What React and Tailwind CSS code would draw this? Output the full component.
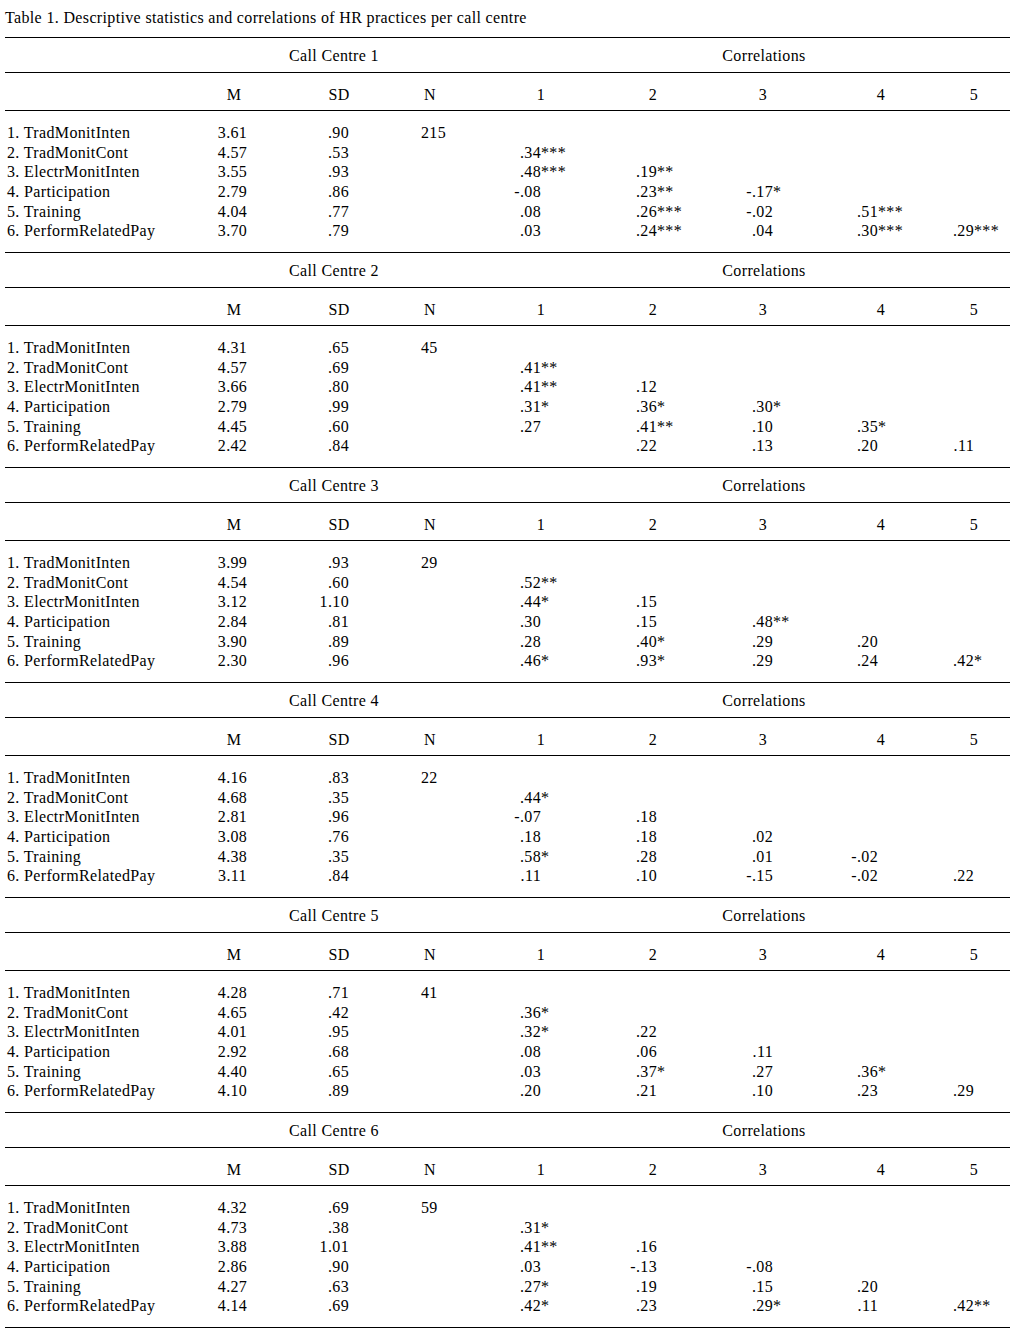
import React from 'react';

const labels = [
  '1. TradMonitInten',
  '2. TradMonitCont',
  '3. ElectrMonitInten',
  '4. Participation',
  '5. Training',
  '6. PerformRelatedPay',
];

// M, SD, correlations with items 1..5 (null = empty cell)
const centres = [
  {
    id: 1, n: '215',
    rows: [
      ['3.61', '.90', []],
      ['4.57', '.53', ['.34***']],
      ['3.55', '.93', ['.48***', '.19**']],
      ['2.79', '.86', ['-.08', '.23**', '-.17*']],
      ['4.04', '.77', ['.08', '.26***', '-.02', '.51***']],
      ['3.70', '.79', ['.03', '.24***', '.04', '.30***', '.29***']],
    ],
  },
  {
    id: 2, n: '45',
    rows: [
      ['4.31', '.65', []],
      ['4.57', '.69', ['.41**']],
      ['3.66', '.80', ['.41**', '.12']],
      ['2.79', '.99', ['.31*', '.36*', '.30*']],
      ['4.45', '.60', ['.27', '.41**', '.10', '.35*']],
      ['2.42', '.84', [null, '.22', '.13', '.20', '.11']],
    ],
  },
  {
    id: 3, n: '29',
    rows: [
      ['3.99', '.93', []],
      ['4.54', '.60', ['.52**']],
      ['3.12', '1.10', ['.44*', '.15']],
      ['2.84', '.81', ['.30', '.15', '.48**']],
      ['3.90', '.89', ['.28', '.40*', '.29', '.20']],
      ['2.30', '.96', ['.46*', '.93*', '.29', '.24', '.42*']],
    ],
  },
  {
    id: 4, n: '22',
    rows: [
      ['4.16', '.83', []],
      ['4.68', '.35', ['.44*']],
      ['2.81', '.96', ['-.07', '.18']],
      ['3.08', '.76', ['.18', '.18', '.02']],
      ['4.38', '.35', ['.58*', '.28', '.01', '-.02']],
      ['3.11', '.84', ['.11', '.10', '-.15', '-.02', '.22']],
    ],
  },
  {
    id: 5, n: '41',
    rows: [
      ['4.28', '.71', []],
      ['4.65', '.42', ['.36*']],
      ['4.01', '.95', ['.32*', '.22']],
      ['2.92', '.68', ['.08', '.06', '.11']],
      ['4.40', '.65', ['.03', '.37*', '.27', '.36*']],
      ['4.10', '.89', ['.20', '.21', '.10', '.23', '.29']],
    ],
  },
  {
    id: 6, n: '59',
    rows: [
      ['4.32', '.69', []],
      ['4.73', '.38', ['.31*']],
      ['3.88', '1.01', ['.41**', '.16']],
      ['2.86', '.90', ['.03', '-.13', '-.08']],
      ['4.27', '.63', ['.27*', '.19', '.15', '.20']],
      ['4.14', '.69', ['.42*', '.23', '.29*', '.11', '.42**']],
    ],
  },
];

// numbers are right-aligned inside num, stars hang after them
const corrCols = [
  { cell: 'ml-[31px] w-[80px]', num: 'w-[40px]' },
  { cell: 'ml-[32px] w-[80px]', num: 'w-[44px]' },
  { cell: 'ml-[30px] w-[80px]', num: 'w-[50px]' },
  { cell: 'ml-[38px] w-[80px]', num: 'w-[37px]' },
  { cell: 'ml-[23px] w-[60px]', num: 'w-[30px]' },
];

const Corr = ({ value, col }) => {
  if (!value) return <div className={`${col.cell} shrink-0`} />;
  const [, num, stars] = value.match(/^(-?[\d.]+)(\**)$/);
  return (
    <div className={`${col.cell} flex shrink-0`}>
      <span className={`${col.num} shrink-0 text-right`}>{num}</span>
      <span className="whitespace-nowrap">{stars}</span>
    </div>
  );
};

const Row = ({ label, m, sd, n, corr }) => (
  <div className="flex h-[19.7px] leading-[19.7px]">
    <div className="w-[189px] shrink-0 whitespace-nowrap pl-[2px]">{label}</div>
    <div className="w-[80px] shrink-0 pr-[3px] text-center">{m}</div>
    <div className="ml-[25px] w-[80px] shrink-0 pr-[30px] text-right">{sd}</div>
    <div className="ml-[11px] w-[80px] shrink-0 pl-[31px]">{n}</div>
    {corrCols.map((col, i) => (
      <Corr key={i} value={corr[i]} col={col} />
    ))}
  </div>
);

const Centre = ({ centre }) => (
  <div className="h-[215px] border-t border-black">
    <div className="flex h-[35px] items-center border-b border-black pt-[1px] leading-[20px]">
      <div className="w-[189px] shrink-0" />
      <div className="w-[280px] shrink-0 text-center">Call Centre {centre.id}</div>
      <div className="ml-[50px] w-[480px] shrink-0 text-center">Correlations</div>
    </div>
    <div className="flex h-[38px] border-b border-black pt-[12px] leading-[20px]">
      <div className="w-[189px] shrink-0" />
      <div className="w-[80px] shrink-0 text-center">M</div>
      <div className="ml-[25px] w-[80px] shrink-0 text-center">SD</div>
      <div className="ml-[11px] w-[80px] shrink-0 text-center">N</div>
      <div className="ml-[31px] w-[80px] shrink-0 text-center">1</div>
      <div className="ml-[32px] w-[80px] shrink-0 text-center">2</div>
      <div className="ml-[30px] w-[80px] shrink-0 text-center">3</div>
      <div className="ml-[38px] w-[80px] shrink-0 text-center">4</div>
      <div className="ml-[23px] w-[60px] shrink-0 text-center">5</div>
    </div>
    <div className="pt-[12px]">
      {centre.rows.map(([m, sd, corr], i) => (
        <Row key={i} label={labels[i]} m={m} sd={sd} n={i === 0 ? centre.n : ''} corr={corr} />
      ))}
    </div>
  </div>
);

export default function App() {
  return (
    <div className="h-[1330px] w-[1016px] overflow-hidden bg-white font-['Liberation_Serif',serif] text-[16px] tracking-[0.35px] text-black">
      <div className="h-[37px] pl-[5px] pt-[8px] leading-[20px]">
        Table 1. Descriptive statistics and correlations of HR practices per call centre
      </div>
      <div className="ml-[5px] w-[1005px] border-b border-black">
        {centres.map((c) => (
          <Centre key={c.id} centre={c} />
        ))}
      </div>
    </div>
  );
}
